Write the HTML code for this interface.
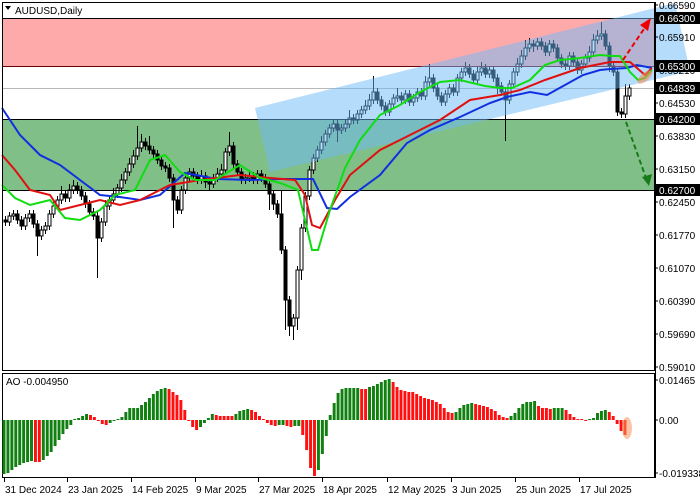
<!DOCTYPE html>
<html><head><meta charset="utf-8"><style>
body{margin:0;background:#fff;width:700px;height:500px;overflow:hidden}
svg{display:block}
text{font-family:"Liberation Sans",sans-serif;font-size:10px;fill:#000}
</style></head><body>
<svg width="700" height="500" xmlns="http://www.w3.org/2000/svg">
<rect x="0" y="0" width="700" height="500" fill="#fff"/>
<rect x="2" y="18" width="653" height="48" fill="#ffaaaa"/>
<rect x="2" y="119" width="653" height="71" fill="#80bf88"/>
<line x1="2" y1="88.5" x2="655" y2="88.5" stroke="#b8b8b8" stroke-width="1"/>
<path fill="none" stroke="#000" stroke-width="1" d="M5.5 216V226M9.5 212V226M13.5 210V220M17.5 210V224M21.5 216V230M25.5 214V230M29.5 210V222M33.5 210V228M37.5 220V256M41.5 226V240M45.5 222V234M49.5 210V230M53.5 202V218M57.5 196V210M61.5 186V204M65.5 190V202M69.5 184V202M73.5 180V194M77.5 182V194M81.5 186V200M85.5 192V208M89.5 200V216M93.5 208V220M97.5 212V278M101.5 218V242M105.5 200V226M109.5 196V210M113.5 188V204M117.5 184V198M121.5 174V192M125.5 168V184M129.5 158V176M133.5 150V168M137.5 126V160M141.5 134V152M145.5 138V150M149.5 136V154M153.5 146V158M157.5 150V164M161.5 156V170M165.5 162V172M169.5 164V182M173.5 174V228M177.5 196V214M181.5 186V214M185.5 174V194M189.5 168V182M193.5 168V180M197.5 172V184M201.5 170V184M205.5 172V188M209.5 178V190M213.5 174V188M217.5 168V182M221.5 164V178M225.5 148V174M229.5 132V156M233.5 142V168M237.5 160V176M241.5 168V184M245.5 174V184M249.5 170V182M253.5 172V184M257.5 170V184M261.5 170V182M265.5 174V188M269.5 180V210M273.5 190V210M277.5 200V218M281.5 190V254M285.5 246V330M289.5 296V336M293.5 314V340M297.5 266V330M301.5 224V280M305.5 192V232M309.5 166V200M313.5 154V174M317.5 146V162M321.5 136V154M325.5 130V146M329.5 124V138M333.5 120V132M337.5 120V142M341.5 124V134M345.5 120V132M349.5 110V128M353.5 114V124M357.5 110V124M361.5 106V118M365.5 100V114M369.5 94V110M373.5 76V104M377.5 88V104M381.5 96V110M385.5 102V116M389.5 100V116M393.5 94V108M397.5 88V102M401.5 92V104M405.5 90V104M409.5 90V106M413.5 94V106M417.5 88V102M421.5 88V100M425.5 76V100M429.5 64V86M433.5 74V92M437.5 84V100M441.5 92V106M445.5 90V106M449.5 84V98M453.5 84V96M457.5 74V96M461.5 68V82M465.5 62V76M469.5 64V78M473.5 70V84M477.5 66V84M481.5 62V76M485.5 64V78M489.5 66V78M493.5 66V82M497.5 74V94M501.5 82V96M505.5 88V141M509.5 80V104M513.5 68V88M517.5 58V76M521.5 50V68M525.5 40V60M529.5 38V52M533.5 40V52M537.5 38V50M541.5 38V50M545.5 42V56M549.5 40V56M553.5 40V52M557.5 44V62M561.5 54V68M565.5 60V70M569.5 52V70M573.5 52V66M577.5 58V74M581.5 60V74M585.5 54V68M589.5 46V62M593.5 34V56M597.5 30V44M601.5 22V40M605.5 30V50M609.5 42V72M613.5 62V76M617.5 68V116M621.5 108V118M625.5 84V118M629.5 84V100"/>
<path fill="#000" stroke="#000" stroke-width="1" d="M4 220h3v2h-3zM16 214h3v6h-3zM20 220h3v6h-3zM32 214h3v10h-3zM36 224h3v12h-3zM64 194h3v4h-3zM76 186h3v4h-3zM80 190h3v6h-3zM84 196h3v8h-3zM88 204h3v8h-3zM92 212h3v4h-3zM96 216h3v22h-3zM144 142h3v4h-3zM148 146h3v4h-3zM152 150h3v4h-3zM156 154h3v6h-3zM160 160h3v6h-3zM164 166h3v2h-3zM168 168h3v10h-3zM172 178h3v22h-3zM176 200h3v10h-3zM192 172h3v4h-3zM196 176h3v4h-3zM204 176h3v6h-3zM208 182h3v2h-3zM232 146h3v18h-3zM236 164h3v8h-3zM240 172h3v8h-3zM252 176h3v4h-3zM260 174h3v4h-3zM264 178h3v6h-3zM268 184h3v10h-3zM272 194h3v10h-3zM276 204h3v10h-3zM280 214h3v36h-3zM284 250h3v50h-3zM288 300h3v26h-3zM336 124h3v6h-3zM352 118h3v2h-3zM376 92h3v8h-3zM380 100h3v6h-3zM384 106h3v6h-3zM400 96h3v4h-3zM408 94h3v8h-3zM420 92h3v4h-3zM432 78h3v10h-3zM436 88h3v8h-3zM440 96h3v6h-3zM452 88h3v4h-3zM468 68h3v6h-3zM472 74h3v6h-3zM484 68h3v6h-3zM492 70h3v8h-3zM496 78h3v8h-3zM500 86h3v6h-3zM504 92h3v8h-3zM532 44h3v2h-3zM540 42h3v4h-3zM544 46h3v6h-3zM552 44h3v4h-3zM556 48h3v10h-3zM560 58h3v6h-3zM564 64h3v2h-3zM572 56h3v6h-3zM576 62h3v8h-3zM604 34h3v12h-3zM608 46h3v20h-3zM612 66h3v6h-3zM616 72h3v40h-3zM620 112h3v2h-3z"/>
<path fill="#fff" stroke="#000" stroke-width="1" d="M8 216h3v6h-3zM12 214h3v2h-3zM24 218h3v8h-3zM28 214h3v4h-3zM40 230h3v6h-3zM44 226h3v4h-3zM48 214h3v12h-3zM52 206h3v8h-3zM56 200h3v6h-3zM60 194h3v6h-3zM68 190h3v8h-3zM72 186h3v4h-3zM100 222h3v16h-3zM104 206h3v16h-3zM108 200h3v6h-3zM112 194h3v6h-3zM116 188h3v6h-3zM120 180h3v8h-3zM124 172h3v8h-3zM128 164h3v8h-3zM132 156h3v8h-3zM136 148h3v8h-3zM140 142h3v6h-3zM180 190h3v20h-3zM184 178h3v12h-3zM188 172h3v6h-3zM200 176h3v4h-3zM212 178h3v6h-3zM216 174h3v4h-3zM220 170h3v4h-3zM224 152h3v18h-3zM228 146h3v6h-3zM244 178h3v2h-3zM248 176h3v2h-3zM256 174h3v6h-3zM292 318h3v8h-3zM296 270h3v48h-3zM300 228h3v42h-3zM304 196h3v32h-3zM308 170h3v26h-3zM312 158h3v12h-3zM316 150h3v8h-3zM320 142h3v8h-3zM324 134h3v8h-3zM328 128h3v6h-3zM332 124h3v4h-3zM340 128h3v2h-3zM344 124h3v4h-3zM348 118h3v6h-3zM356 114h3v6h-3zM360 110h3v4h-3zM364 106h3v4h-3zM368 100h3v6h-3zM372 92h3v8h-3zM388 104h3v8h-3zM392 98h3v6h-3zM396 96h3v2h-3zM404 94h3v6h-3zM412 98h3v4h-3zM416 92h3v6h-3zM424 82h3v14h-3zM428 78h3v4h-3zM444 94h3v8h-3zM448 88h3v6h-3zM456 78h3v14h-3zM460 72h3v6h-3zM464 68h3v4h-3zM476 72h3v8h-3zM480 68h3v4h-3zM488 70h3v4h-3zM508 84h3v16h-3zM512 72h3v12h-3zM516 64h3v8h-3zM520 56h3v8h-3zM524 48h3v8h-3zM528 44h3v4h-3zM536 42h3v4h-3zM548 44h3v8h-3zM568 56h3v10h-3zM580 64h3v6h-3zM584 58h3v6h-3zM588 52h3v6h-3zM592 40h3v12h-3zM596 36h3v4h-3zM600 34h3v2h-3zM624 96h3v18h-3zM628 88h3v8h-3z"/>
<line x1="2" y1="18.5" x2="655" y2="18.5" stroke="#000" stroke-width="1"/>
<line x1="2" y1="66.5" x2="655" y2="66.5" stroke="#600" stroke-width="1"/>
<line x1="2" y1="119.5" x2="655" y2="119.5" stroke="#000" stroke-width="1"/>
<line x1="2" y1="190.5" x2="655" y2="190.5" stroke="#000" stroke-width="1"/>
<polygon points="255,108 675,3 690,71 270,172" fill="rgba(110,185,250,0.5)"/>
<polyline fill="none" stroke="#1030e0" stroke-width="2" points="2,108 20,135 40,155 60,165 80,180 100,195 120,197 140,200 160,195 185,173 217,179 250,180 280,179 313,179 327,208 337,209 350,197 380,175 407,143 430,130 460,117 490,103 507,97 530,92 547,95 565,85 583,75 600,70 610,69 627,68 637,65 652,68"/>
<polyline fill="none" stroke="#e01010" stroke-width="2" points="2,155 15,170 30,190 50,195 60,210 80,205 100,200 120,205 140,200 160,190 170,185 200,180 240,175 270,178 295,180 305,195 312,225 320,228 335,200 350,175 380,150 410,135 440,120 470,100 500,95 520,90 545,80 580,68 610,62 630,62 645,75 652,68"/>
<polyline fill="none" stroke="#10dd10" stroke-width="2" points="2,185 15,198 30,205 50,200 65,218 80,220 100,210 115,195 135,190 150,160 165,155 180,172 195,180 215,180 240,165 260,178 280,183 298,190 305,220 312,250 318,250 330,210 345,168 360,140 380,115 400,105 420,92 440,82 460,80 485,86 500,88 512,88 530,80 545,65 560,60 580,58 600,55 612,56 620,56 630,72 638,80 645,78 652,70"/>
<line x1="623" y1="60" x2="646" y2="26" stroke="#e00" stroke-width="2" stroke-dasharray="5,3"/>
<polygon points="651,18 640,25 648,31" fill="#e00"/>
<line x1="626" y1="122" x2="646" y2="178" stroke="#1a7a1a" stroke-width="2" stroke-dasharray="5,3"/>
<polygon points="649,186 642,177 652,174" fill="#1a7a1a"/>
<ellipse cx="645" cy="77" rx="9" ry="4" transform="rotate(-40 645 77)" fill="rgba(240,140,90,0.6)"/>
<rect x="2.5" y="2.5" width="652" height="368" fill="none" stroke="#000"/>
<rect x="2.5" y="373.5" width="652" height="104" fill="none" stroke="#000"/>
<path d="M5 6 L11 6 L8 10 Z" fill="#000"/>
<text x="15" y="14">AUDUSD,Daily</text>
<text x="6" y="385">AO -0.004950</text>
<g transform="translate(4,0) scale(0.9826,1)">
<path fill="#108010" d="M-1.5 420h3v54h-3zM2.5 420h3v53h-3zM6.5 420h3v50h-3zM10.5 420h3v47h-3zM14.5 420h3v45h-3zM18.5 420h3v43h-3zM22.5 420h3v42h-3zM26.5 420h3v41h-3zM38.5 420h3v40h-3zM42.5 420h3v36h-3zM46.5 420h3v32h-3zM50.5 420h3v26h-3zM54.5 420h3v20h-3zM58.5 420h3v14h-3zM62.5 420h3v9h-3zM66.5 420h3v5h-3zM70.5 419h3v1h-3zM74.5 418h3v2h-3zM78.5 416h3v4h-3zM82.5 414h3v6h-3zM106.5 420h3v3h-3zM110.5 420h3v1h-3zM114.5 419h3v1h-3zM118.5 417h3v3h-3zM122.5 412h3v8h-3zM126.5 408h3v12h-3zM130.5 408h3v12h-3zM134.5 408h3v12h-3zM138.5 405h3v15h-3zM142.5 402h3v18h-3zM146.5 398h3v22h-3zM150.5 394h3v26h-3zM154.5 391h3v29h-3zM158.5 389h3v31h-3zM162.5 388h3v32h-3zM198.5 420h3v7h-3zM202.5 420h3v3h-3zM206.5 418h3v2h-3zM210.5 414h3v6h-3zM234.5 414h3v6h-3zM238.5 411h3v9h-3zM242.5 410h3v10h-3zM246.5 409h3v11h-3zM278.5 420h3v5h-3zM282.5 420h3v5h-3zM294.5 420h3v6h-3zM298.5 420h3v6h-3zM318.5 420h3v50h-3zM322.5 420h3v34h-3zM326.5 420h3v16h-3zM330.5 415h3v5h-3zM334.5 403h3v17h-3zM338.5 393h3v27h-3zM342.5 389h3v31h-3zM346.5 388h3v32h-3zM350.5 388h3v32h-3zM354.5 388h3v32h-3zM358.5 388h3v32h-3zM370.5 387h3v33h-3zM374.5 386h3v34h-3zM378.5 384h3v36h-3zM382.5 382h3v38h-3zM386.5 380h3v40h-3zM390.5 379h3v41h-3zM458.5 412h3v8h-3zM462.5 408h3v12h-3zM466.5 405h3v15h-3zM470.5 404h3v16h-3zM474.5 403h3v17h-3zM514.5 416h3v4h-3zM518.5 413h3v7h-3zM522.5 408h3v12h-3zM526.5 404h3v16h-3zM530.5 402h3v18h-3zM534.5 402h3v18h-3zM538.5 401h3v19h-3zM558.5 408h3v12h-3zM562.5 408h3v12h-3zM566.5 408h3v12h-3zM594.5 419h3v1h-3zM598.5 418h3v2h-3zM602.5 413h3v7h-3zM606.5 411h3v9h-3zM610.5 410h3v10h-3z"/>
<path fill="#ff1010" d="M30.5 420h3v42h-3zM34.5 420h3v42h-3zM86.5 415h3v5h-3zM90.5 417h3v3h-3zM94.5 420h3v1h-3zM98.5 420h3v4h-3zM102.5 420h3v5h-3zM166.5 389h3v31h-3zM170.5 392h3v28h-3zM174.5 395h3v25h-3zM178.5 400h3v20h-3zM182.5 410h3v10h-3zM186.5 420h3v1h-3zM190.5 420h3v7h-3zM194.5 420h3v10h-3zM214.5 415h3v5h-3zM218.5 416h3v4h-3zM222.5 416h3v4h-3zM226.5 416h3v4h-3zM230.5 416h3v4h-3zM250.5 410h3v10h-3zM254.5 412h3v8h-3zM258.5 416h3v4h-3zM262.5 419h3v1h-3zM266.5 420h3v3h-3zM270.5 420h3v5h-3zM274.5 420h3v6h-3zM286.5 420h3v6h-3zM290.5 420h3v7h-3zM302.5 420h3v15h-3zM306.5 420h3v30h-3zM310.5 420h3v48h-3zM314.5 420h3v56h-3zM362.5 389h3v31h-3zM366.5 389h3v31h-3zM394.5 382h3v38h-3zM398.5 387h3v33h-3zM402.5 390h3v30h-3zM406.5 391h3v29h-3zM410.5 392h3v28h-3zM414.5 392h3v28h-3zM418.5 394h3v26h-3zM422.5 396h3v24h-3zM426.5 398h3v22h-3zM430.5 399h3v21h-3zM434.5 400h3v20h-3zM438.5 402h3v18h-3zM442.5 404h3v16h-3zM446.5 408h3v12h-3zM450.5 412h3v8h-3zM454.5 413h3v7h-3zM478.5 404h3v16h-3zM482.5 405h3v15h-3zM486.5 406h3v14h-3zM490.5 407h3v13h-3zM494.5 409h3v11h-3zM498.5 411h3v9h-3zM502.5 415h3v5h-3zM506.5 417h3v3h-3zM510.5 418h3v2h-3zM542.5 406h3v14h-3zM546.5 408h3v12h-3zM550.5 408h3v12h-3zM554.5 409h3v11h-3zM570.5 410h3v10h-3zM574.5 414h3v6h-3zM578.5 417h3v3h-3zM582.5 419h3v1h-3zM586.5 419h3v1h-3zM590.5 420h3v1h-3zM614.5 412h3v8h-3zM618.5 416h3v4h-3zM622.5 420h3v4h-3zM626.5 420h3v11h-3zM630.5 420h3v15h-3z"/>
</g>
<ellipse cx="627" cy="428" rx="5" ry="11" fill="rgba(245,150,90,0.55)"/>
<line x1="655.5" y1="2" x2="655.5" y2="478" stroke="#000"/>
<g stroke="#000">
<line x1="655" y1="5" x2="658" y2="5"/><line x1="655" y1="37" x2="658" y2="37"/><line x1="655" y1="70" x2="658" y2="70"/><line x1="655" y1="103" x2="658" y2="103"/><line x1="655" y1="136" x2="658" y2="136"/><line x1="655" y1="169" x2="658" y2="169"/><line x1="655" y1="202" x2="658" y2="202"/><line x1="655" y1="235" x2="658" y2="235"/><line x1="655" y1="268" x2="658" y2="268"/><line x1="655" y1="301" x2="658" y2="301"/><line x1="655" y1="334" x2="658" y2="334"/><line x1="655" y1="367" x2="658" y2="367"/><line x1="655" y1="380" x2="658" y2="380"/><line x1="655" y1="420" x2="658" y2="420"/><line x1="655" y1="473" x2="658" y2="473"/>
</g>
<text x="659" y="9">0.66590</text><text x="659" y="41">0.65910</text><text x="659" y="74">0.65210</text><text x="659" y="107">0.64530</text><text x="659" y="140">0.63830</text><text x="659" y="173">0.63150</text><text x="659" y="206">0.62450</text><text x="659" y="239">0.61770</text><text x="659" y="272">0.61070</text><text x="659" y="305">0.60390</text><text x="659" y="338">0.59690</text><text x="659" y="371">0.59010</text><text x="659" y="384">0.01465</text><text x="659" y="424">0.00</text><text x="659" y="477">-0.019338</text>
<rect x="656" y="12" width="44" height="12" fill="#000"/><text x="659" y="22" style="fill:#fff">0.66300</text>
<rect x="656" y="60" width="44" height="12" fill="#000"/><text x="659" y="70" style="fill:#fff">0.65300</text>
<rect x="656" y="82" width="44" height="12" fill="#000"/><text x="659" y="92" style="fill:#fff">0.64839</text>
<rect x="656" y="113" width="44" height="12" fill="#000"/><text x="659" y="123" style="fill:#fff">0.64200</text>
<rect x="656" y="184" width="44" height="12" fill="#000"/><text x="659" y="194" style="fill:#fff">0.62700</text>
<g stroke="#000"><line x1="4.5" y1="478" x2="4.5" y2="482"/><line x1="67.5" y1="478" x2="67.5" y2="482"/><line x1="131.5" y1="478" x2="131.5" y2="482"/><line x1="195.5" y1="478" x2="195.5" y2="482"/><line x1="258.5" y1="478" x2="258.5" y2="482"/><line x1="322.5" y1="478" x2="322.5" y2="482"/><line x1="387.5" y1="478" x2="387.5" y2="482"/><line x1="451.5" y1="478" x2="451.5" y2="482"/><line x1="515.5" y1="478" x2="515.5" y2="482"/><line x1="579.5" y1="478" x2="579.5" y2="482"/></g>
<text x="5" y="493">31 Dec 2024</text><text x="68" y="493">23 Jan 2025</text><text x="132" y="493">14 Feb 2025</text><text x="196" y="493">9 Mar 2025</text><text x="259" y="493">27 Mar 2025</text><text x="323" y="493">18 Apr 2025</text><text x="388" y="493">12 May 2025</text><text x="452" y="493">3 Jun 2025</text><text x="516" y="493">25 Jun 2025</text><text x="580" y="493">17 Jul 2025</text>
</svg>
</body></html>
